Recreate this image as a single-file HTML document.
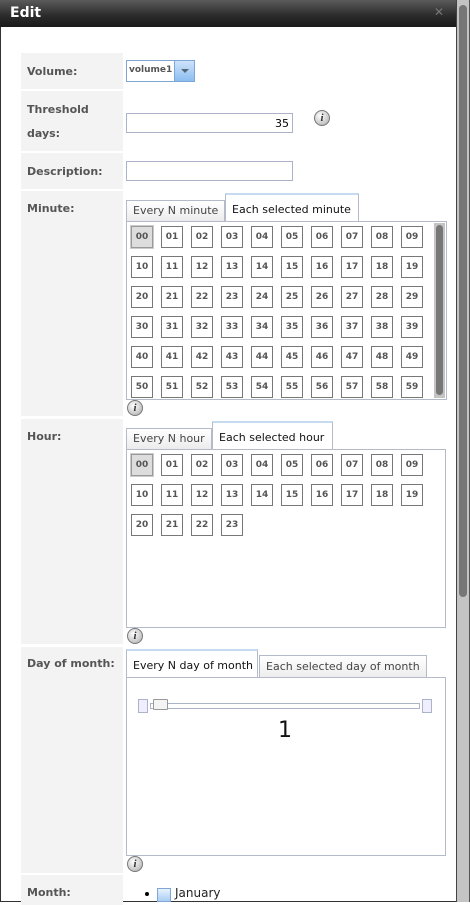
<!DOCTYPE html>
<html><head><style>
*{box-sizing:border-box;margin:0;padding:0}
body{width:470px;height:902px;overflow:hidden;background:#fff;font-family:"DejaVu Sans","Liberation Sans",sans-serif;position:relative}
.abs{position:absolute}
.title{left:0;top:0;width:470px;height:27px;background:linear-gradient(#5a5a5a,#2a2a2a 60%,#1a1a1a);color:#fff;font-weight:bold;font-size:14px;padding:5px 10px}
.frame{left:0;top:27px;width:457px;height:875px;border-left:1px solid #333;border-bottom:1px solid #333}
.sb{left:456px;top:0;width:14px;height:902px;background:#c4c4c4;border-left:1px solid #444;border-right:1px solid #555}
.thumb{left:459px;top:5px;width:8px;height:592px;background:#777;border-radius:4px}
.lbl{left:21px;width:102px;background:#f3f3f3;font-weight:bold;font-size:11px;color:#555;padding:10px 6px;line-height:24px}
.inp{border:1px solid #aab3c8;background:#fff;height:20px}
.tab{border:1px solid #b4bac8;border-bottom:none;background:linear-gradient(#fff,#ececec);font-size:11px;color:#444;padding:3px 6px;white-space:nowrap}
.tab.act{background:#fff;color:#111;border-top:2px solid #c6daf0}
.panel{border:1px solid #b4bac8;background:#fff}
.c{position:absolute;width:22px;height:22px;border:1px solid #777;font-size:9px;font-weight:bold;color:#555;text-align:center;line-height:20px}
.c.s{background:#ddd;border-color:#999;outline:1px solid #ccc}
.info{width:16px;height:16px;border-radius:50%;background:radial-gradient(circle at 40% 35%,#fff,#aaa);border:1px solid #777;font:italic bold 11px "Liberation Serif",serif;color:#333;text-align:center;line-height:14px}
</style></head><body>
<div class="abs title">Edit<span style="position:absolute;right:26px;top:5px;color:#777;font-size:12px">✕</span></div>
<div class="abs frame"></div>
<div class="abs sb"></div><div class="abs thumb"></div>

<div class="abs lbl" style="top:53px;height:36px;padding-top:7px">Volume:</div>
<div class="abs inp" style="left:126px;top:60px;width:69px;height:22px;border-color:#7ea7d8;font-size:9px;font-weight:bold;color:#555;padding:4px 2px">volume1<div class="abs" style="left:47px;top:0;width:20px;height:20px;background:linear-gradient(#cfe3fb,#8bbdf0);border-left:1px solid #7ea7d8"><div class="abs" style="left:6px;top:8px;border:4px solid transparent;border-top:4px solid #567;"></div></div></div>

<div class="abs lbl" style="top:91px;height:60px;padding-top:7px">Threshold days:</div>
<div class="abs inp" style="left:126px;top:113px;width:167px;font-size:11px;text-align:right;padding:3px 3px">35</div>
<div class="abs info" style="left:314px;top:110px">i</div>

<div class="abs lbl" style="top:153px;height:36px;padding-top:7px">Description:</div>
<div class="abs inp" style="left:126px;top:161px;width:167px"></div>

<div class="abs lbl" style="top:191px;height:225px;padding-top:6px">Minute:</div>
<div class="abs tab" style="left:126px;top:200px;width:99px;height:21px">Every N minute</div>
<div class="abs tab act" style="left:225px;top:193px;width:134px;height:29px;padding-top:8px">Each selected minute</div>
<div class="abs panel" style="left:126px;top:221px;width:321px;height:179px" id="mp"></div>
<div class="abs" style="left:434px;top:223px;width:11px;height:175px;background:#c4c4c4"><div class="abs" style="left:2px;top:2px;width:7px;height:170px;background:#777;border-radius:4px"></div></div>
<div class="abs info" style="left:127px;top:400px">i</div>

<div class="abs lbl" style="top:419px;height:225px;padding-top:6px">Hour:</div>
<div class="abs tab" style="left:126px;top:428px;width:86px;height:21px">Every N hour</div>
<div class="abs tab act" style="left:212px;top:421px;width:121px;height:29px;padding-top:8px">Each selected hour</div>
<div class="abs panel" style="left:126px;top:449px;width:320px;height:179px"></div>
<div class="abs info" style="left:127px;top:628px">i</div>

<div class="abs lbl" style="top:647px;height:226px;padding-top:5px">Day of month:</div>
<div class="abs tab act" style="left:126px;top:649px;width:132px;height:29px;padding-top:8px">Every N day of month</div>
<div class="abs tab" style="left:259px;top:655px;width:168px;height:23px;padding-top:4px">Each selected day of month</div>
<div class="abs panel" style="left:126px;top:677px;width:320px;height:179px"></div>
<div class="abs" style="left:138px;top:699px;width:10px;height:14px;border:1px solid #aab3c8;background:#eef"></div>
<div class="abs" style="left:150px;top:703px;width:270px;height:6px;border:1px solid #aab3c8"></div>
<div class="abs" style="left:153px;top:699px;width:15px;height:11px;border:1px solid #999;background:#f4f4f4;border-radius:1px"></div>
<div class="abs" style="left:422px;top:699px;width:10px;height:14px;border:1px solid #aab3c8;background:#eef"></div>
<div class="abs" style="left:270px;top:718px;width:30px;text-align:center;font-size:22px;color:#111">1</div>
<div class="abs info" style="left:127px;top:856px">i</div>

<div class="abs lbl" style="top:875px;height:30px;padding-top:6px">Month:</div>
<div class="abs" style="left:145px;top:892px;width:4px;height:4px;border-radius:50%;background:#000"></div>
<div class="abs" style="left:157px;top:888px;width:14px;height:14px;border:1px solid #7ea7d8;background:linear-gradient(#e8f2fe,#a9cdf3)"></div>
<div class="abs" style="left:175px;top:886px;font-size:12px;color:#222">January</div>

<script>
function grid(x0,y0,n){var s='';for(var i=0;i<n;i++){var r=Math.floor(i/10),c=i%10;s+='<div class="c'+(i==0?' s':'')+'" style="left:'+(x0+c*30)+'px;top:'+(y0+r*30)+'px">'+(i<10?'0':'')+i+'</div>';}document.body.insertAdjacentHTML('beforeend',s);}
grid(131,226,60);grid(131,454,24);
</script>
</body></html>
